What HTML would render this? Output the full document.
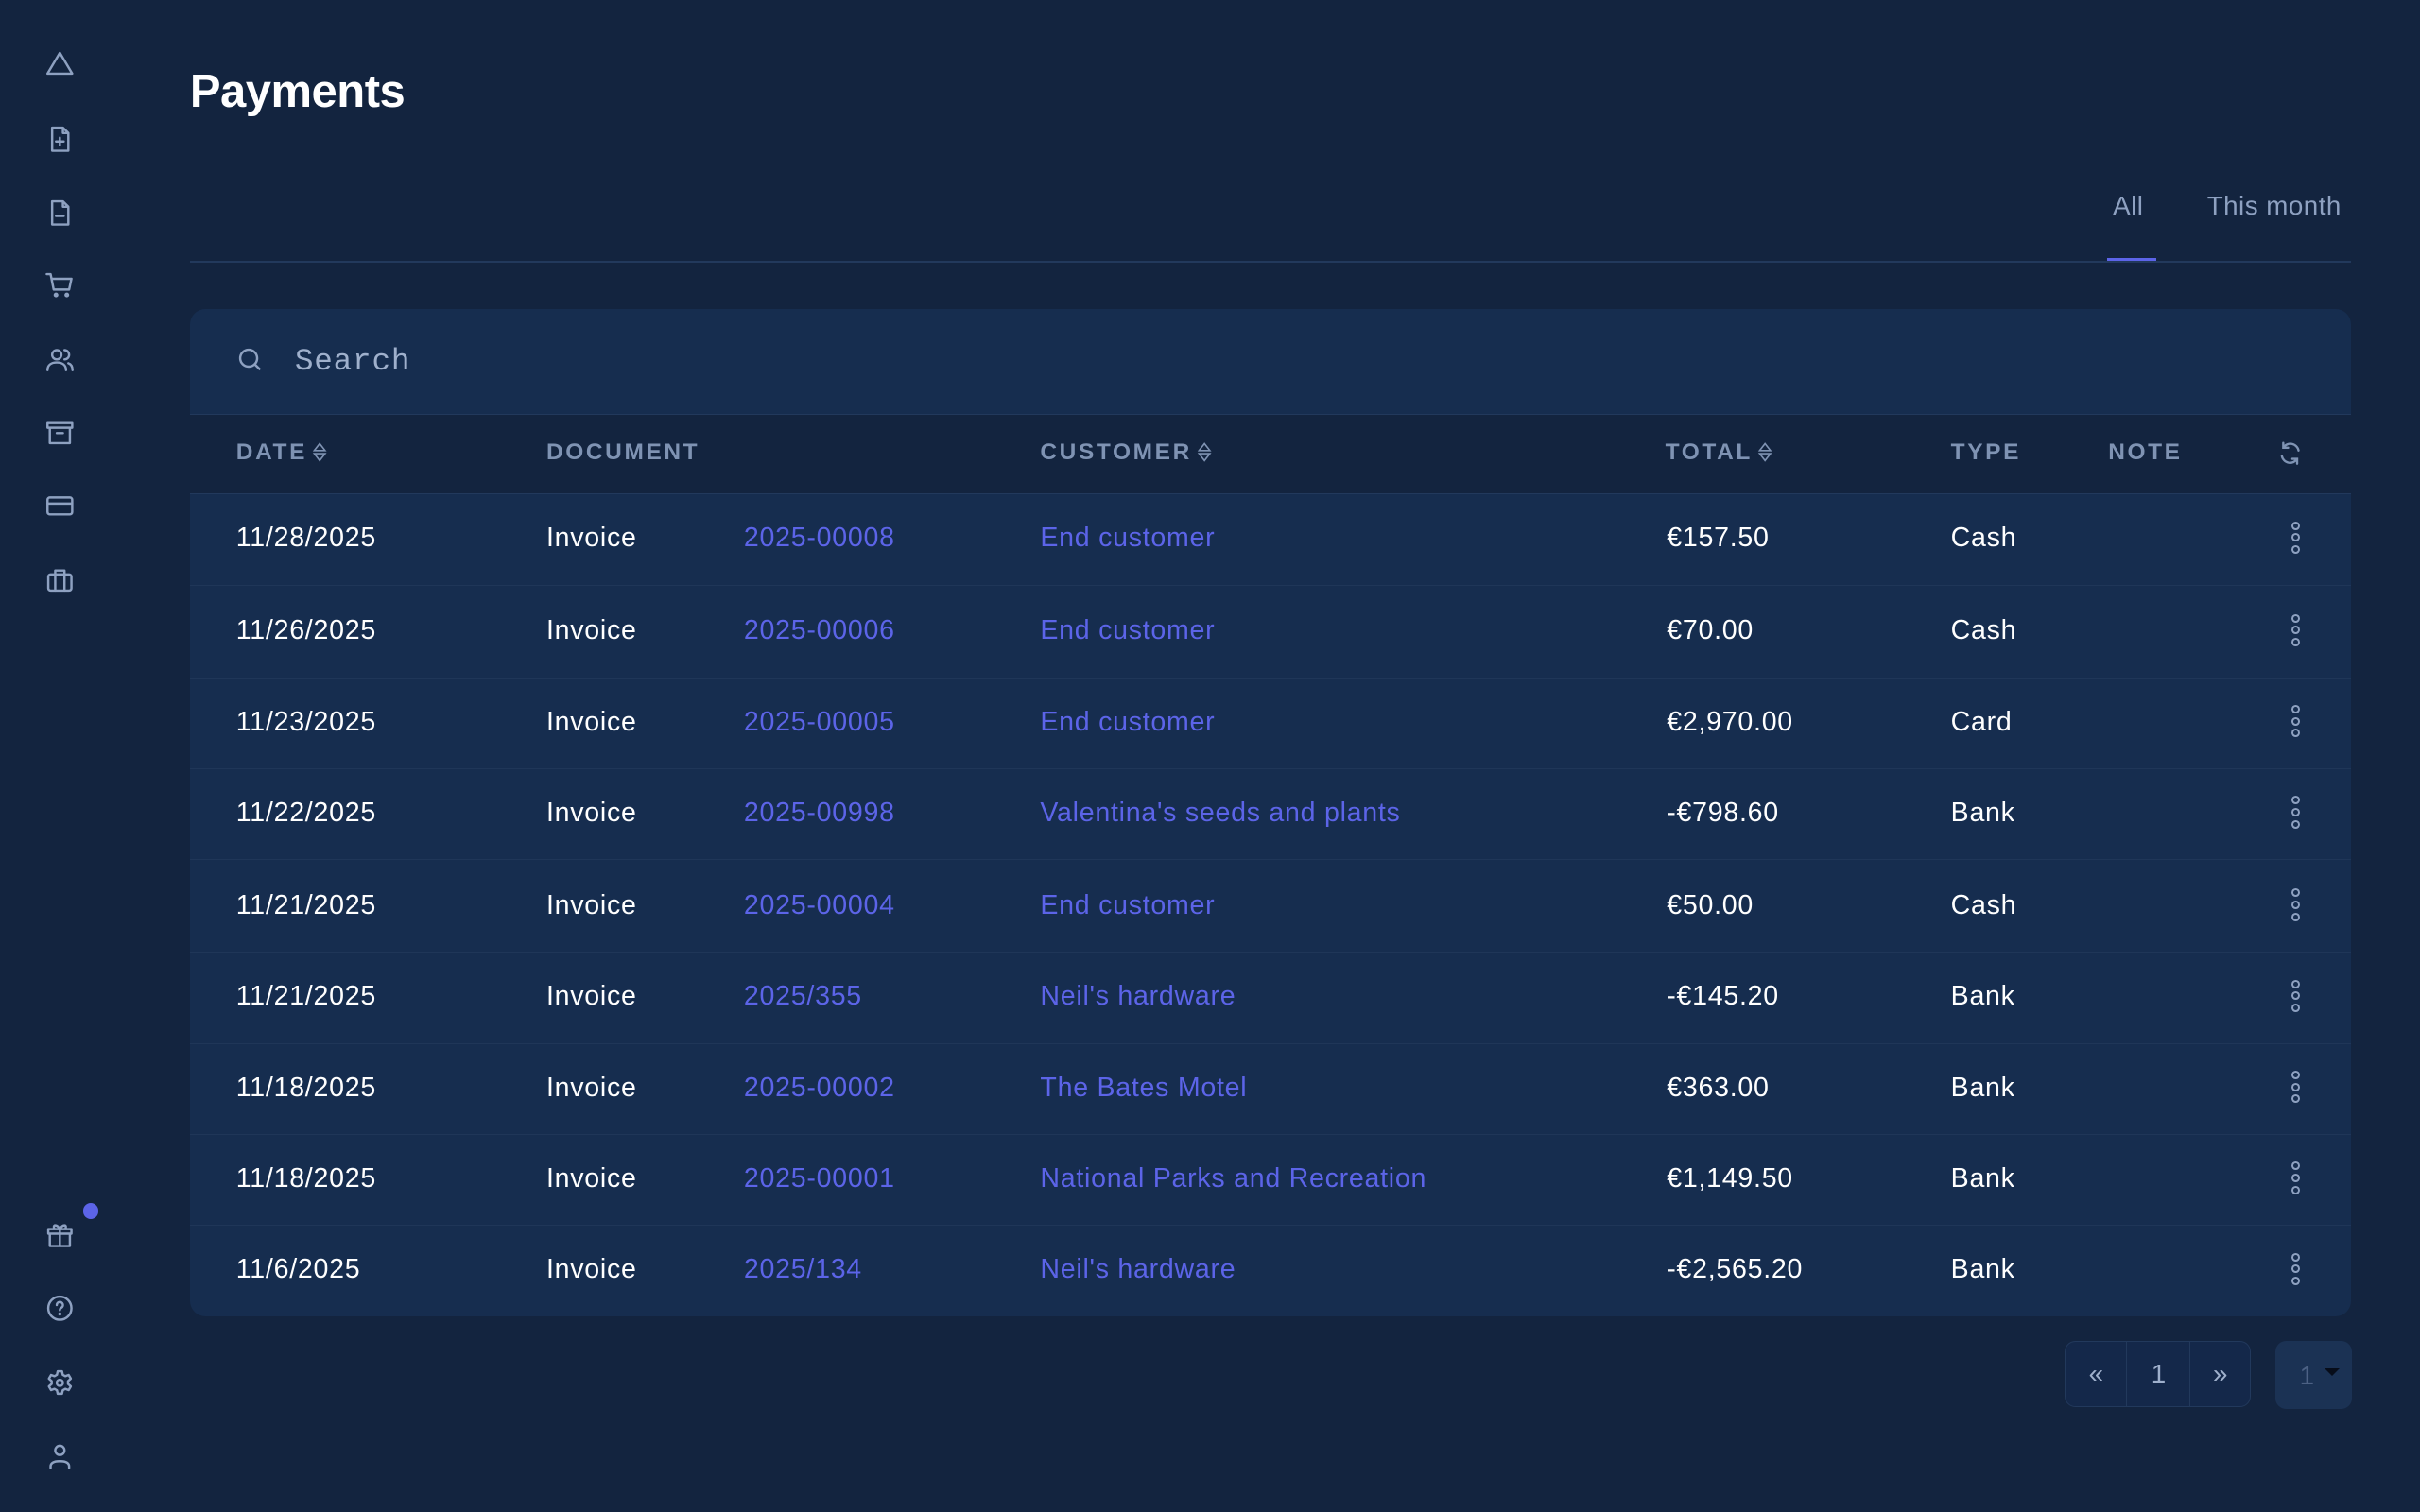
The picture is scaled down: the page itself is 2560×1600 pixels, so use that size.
<!DOCTYPE html>
<html><head><meta charset="utf-8"><style>
html,body{margin:0;padding:0;background:#13243f;overflow:hidden}
#w{zoom:1.632653;width:1568px;height:980px;position:relative;font-family:"Liberation Sans",sans-serif;color:#fff}
.ic{position:absolute;left:29px;width:20px;height:20px}
.ic svg{width:20px;height:20px;fill:none;stroke:#8ea1c1;stroke-width:1.5;stroke-linecap:round;stroke-linejoin:round}
h1{position:absolute;left:123px;top:42px;margin:0;font-size:30px;font-weight:bold;letter-spacing:-0.3px}
.tab{position:absolute;top:124px;font-size:17px;color:#8ea1c1;letter-spacing:0.3px}
.line{position:absolute;left:123px;top:169px;width:1400px;height:1px;background:#22395c}
.card{position:absolute;left:123px;top:200px;width:1400px;height:653px;background:#162d4f;border-radius:10px;overflow:hidden}
.search{position:absolute;left:68px;top:23px;font-family:"Liberation Mono",monospace;font-size:20px;color:#9fb0cc;letter-spacing:0.5px}
.hdr{position:absolute;left:0;top:68px;width:1400px;height:51px;background:#13243f;border-top:1px solid #22395c;border-bottom:1px solid #22395c}
.h{position:absolute;top:17px;font-size:15px;font-weight:bold;letter-spacing:1.6px;color:#7f93b3;line-height:16px}
.h svg{vertical-align:-2px;margin-left:3px}
.row{position:absolute;left:0;width:1400px;height:59px;border-bottom:1px solid #1f3658;font-size:17.5px;letter-spacing:0.45px}
.row span{position:absolute;top:19px}
.l{color:#5c64e8}
.dots{position:absolute;left:1362px;top:18px;width:6px}
.dots i{display:block;width:3px;height:3px;border:1.3px solid #8ea1c1;border-radius:50%;margin-bottom:2.3px}
.pg{position:absolute;top:869px;height:42px;border:1px solid #22395c;border-radius:7px;left:1338px;width:119px;background:#14284a;color:#9fb0cc;font-size:17px}
.pg div{position:absolute;top:0;height:42px;line-height:42px;text-align:center}
</style></head><body><div id="w">
<div class="ic" style="top:31px"><svg viewBox="0 0 20 20"><path d="M10 3L2 16.5h16z"/></svg></div>
<div class="ic" style="top:80px"><svg viewBox="0 0 20 20"><path d="M5 2.5h7l3.5 3.5v11.5H5z M12 2.5v3.5h3.5 M10 9v5 M7.5 11.5h5"/></svg></div>
<div class="ic" style="top:128px"><svg viewBox="0 0 20 20"><path d="M5 2.5h7l3.5 3.5v11.5H5z M12 2.5v3.5h3.5 M7.5 12h5"/></svg></div>
<div class="ic" style="top:175px"><svg viewBox="0 0 20 20"><path d="M1.5 2.5h2.5l2 10h10l1.5-7H5"/><circle cx="7.5" cy="16" r="0.8"/><circle cx="14.5" cy="16" r="0.8"/></svg></div>
<div class="ic" style="top:223px"><svg viewBox="0 0 20 20"><circle cx="8" cy="7" r="3"/><path d="M2 17c0-3.5 2.7-5 6-5s6 1.5 6 5 M13 4a3 3 0 010 6 M15.5 12.5c1.8.6 2.7 2.2 2.7 4.5"/></svg></div>
<div class="ic" style="top:271px"><svg viewBox="0 0 20 20"><path d="M2 3.5h16v3H2z M3.5 6.5v10h13v-10 M8 10h4"/></svg></div>
<div class="ic" style="top:318px"><svg viewBox="0 0 20 20"><rect x="2" y="4.5" width="16" height="11" rx="1.5"/><path d="M2 8.5h16"/></svg></div>
<div class="ic" style="top:366px"><svg viewBox="0 0 20 20"><rect x="2.5" y="6" width="15" height="10.5" rx="1.5"/><path d="M7 6V3.5h6V6 M7 6v10.5 M13 6v10.5"/></svg></div>
<div class="ic" style="top:790px"><svg viewBox="0 0 20 20"><path d="M2.5 6.5h15v3h-15z M3.5 9.5v8h13v-8 M10 6.5v11 M10 6.5C8 3 5 3.5 6.5 6.5 M10 6.5c2-3.5 5-3 3.5 0"/></svg></div>
<div style="position:absolute;left:54px;top:780px;width:10px;height:10px;border-radius:50%;background:#5c64e8"></div>
<div class="ic" style="top:838px"><svg viewBox="0 0 20 20"><circle cx="10" cy="10" r="7.5"/><path d="M8 8a2 2 0 113 1.7c-.7.4-1 .8-1 1.6"/><circle cx="10" cy="13.8" r=".3"/></svg></div>
<div class="ic" style="top:886px"><svg viewBox="0 0 20 20"><path d="M8.6 2.5h2.8l.5 2.3 1.6.9 2.2-.8 1.4 2.4-1.8 1.6v1.8l1.8 1.6-1.4 2.4-2.2-.8-1.6.9-.5 2.3H8.6l-.5-2.3-1.6-.9-2.2.8-1.4-2.4 1.8-1.6V8.9L2.9 7.3l1.4-2.4 2.2.8 1.6-.9z"/><circle cx="10" cy="10" r="2"/></svg></div>
<div class="ic" style="top:934px"><svg viewBox="0 0 20 20"><circle cx="10" cy="6" r="3"/><path d="M4 17.5v-1c0-2.5 2.5-3.5 6-3.5s6 1 6 3.5v1"/></svg></div>

<h1>Payments</h1>
<div class="tab" style="left:1369px">All</div>
<div class="tab" style="left:1430px">This month</div>
<div class="line"></div>
<div style="position:absolute;left:1365px;top:167px;width:32px;height:2px;background:#5c64e8"></div>

<div class="card">
<svg style="position:absolute;left:30px;top:24px" width="18" height="18" viewBox="0 0 18 18" fill="none" stroke="#8ea1c1" stroke-width="1.5"><circle cx="8" cy="8" r="5.5"/><path d="M12 12l3.5 3.5"/></svg>
<div class="search">Search</div>
<div class="hdr">
<div class="h" style="left:30px">DATE<svg width="10" height="14" viewBox="0 0 10 14" fill="none" stroke="#7f93b3" stroke-width="1"><path d="M1.5 6L5 1.5 8.5 6z M1.5 8L5 12.5 8.5 8z"/></svg></div>
<div class="h" style="left:231px">DOCUMENT</div>
<div class="h" style="left:551px">CUSTOMER<svg width="10" height="14" viewBox="0 0 10 14" fill="none" stroke="#7f93b3" stroke-width="1"><path d="M1.5 6L5 1.5 8.5 6z M1.5 8L5 12.5 8.5 8z"/></svg></div>
<div class="h" style="left:956px">TOTAL<svg width="10" height="14" viewBox="0 0 10 14" fill="none" stroke="#7f93b3" stroke-width="1"><path d="M1.5 6L5 1.5 8.5 6z M1.5 8L5 12.5 8.5 8z"/></svg></div>
<div class="h" style="left:1141px">TYPE</div>
<div class="h" style="left:1243px">NOTE</div>
<svg style="position:absolute;left:1352px;top:16px" width="18" height="18" viewBox="0 0 20 20" fill="none" stroke="#7f93b3" stroke-width="1.6" stroke-linecap="round"><path d="M16 8a6 6 0 00-11-2 M4 12a6 6 0 0011 2 M5 2.5V6h3.5 M15 17.5V14h-3.5"/></svg>
</div>
<div class="row" style="top:120px"><span style="left:30px">11/28/2025</span><span style="left:231px">Invoice</span><span class="l" style="left:359px">2025-00008</span><span class="l" style="left:551px">End customer</span><span style="left:957px">€157.50</span><span style="left:1141px">Cash</span><div class="dots"><i></i><i></i><i></i></div></div>
<div class="row" style="top:180px"><span style="left:30px">11/26/2025</span><span style="left:231px">Invoice</span><span class="l" style="left:359px">2025-00006</span><span class="l" style="left:551px">End customer</span><span style="left:957px">€70.00</span><span style="left:1141px">Cash</span><div class="dots"><i></i><i></i><i></i></div></div>
<div class="row" style="top:239px"><span style="left:30px">11/23/2025</span><span style="left:231px">Invoice</span><span class="l" style="left:359px">2025-00005</span><span class="l" style="left:551px">End customer</span><span style="left:957px">€2,970.00</span><span style="left:1141px">Card</span><div class="dots"><i></i><i></i><i></i></div></div>
<div class="row" style="top:298px"><span style="left:30px">11/22/2025</span><span style="left:231px">Invoice</span><span class="l" style="left:359px">2025-00998</span><span class="l" style="left:551px">Valentina's seeds and plants</span><span style="left:957px">-€798.60</span><span style="left:1141px">Bank</span><div class="dots"><i></i><i></i><i></i></div></div>
<div class="row" style="top:358px"><span style="left:30px">11/21/2025</span><span style="left:231px">Invoice</span><span class="l" style="left:359px">2025-00004</span><span class="l" style="left:551px">End customer</span><span style="left:957px">€50.00</span><span style="left:1141px">Cash</span><div class="dots"><i></i><i></i><i></i></div></div>
<div class="row" style="top:417px"><span style="left:30px">11/21/2025</span><span style="left:231px">Invoice</span><span class="l" style="left:359px">2025/355</span><span class="l" style="left:551px">Neil's hardware</span><span style="left:957px">-€145.20</span><span style="left:1141px">Bank</span><div class="dots"><i></i><i></i><i></i></div></div>
<div class="row" style="top:476px"><span style="left:30px">11/18/2025</span><span style="left:231px">Invoice</span><span class="l" style="left:359px">2025-00002</span><span class="l" style="left:551px">The Bates Motel</span><span style="left:957px">€363.00</span><span style="left:1141px">Bank</span><div class="dots"><i></i><i></i><i></i></div></div>
<div class="row" style="top:535px"><span style="left:30px">11/18/2025</span><span style="left:231px">Invoice</span><span class="l" style="left:359px">2025-00001</span><span class="l" style="left:551px">National Parks and Recreation</span><span style="left:957px">€1,149.50</span><span style="left:1141px">Bank</span><div class="dots"><i></i><i></i><i></i></div></div>
<div class="row" style="top:594px;border-bottom:none"><span style="left:30px">11/6/2025</span><span style="left:231px">Invoice</span><span class="l" style="left:359px">2025/134</span><span class="l" style="left:551px">Neil's hardware</span><span style="left:957px">-€2,565.20</span><span style="left:1141px">Bank</span><div class="dots"><i></i><i></i><i></i></div></div>
</div>

<div class="pg"><div style="left:0;width:39px;border-right:1px solid #22395c">«</div><div style="left:40px;width:40px;border-right:1px solid #22395c">1</div><div style="left:81px;width:38px">»</div></div>
<div style="position:absolute;left:1474px;top:869px;width:50px;height:44px;border-radius:7px;background:#1b3254;color:#4c6184;font-size:17px"><span style="position:absolute;left:16px;top:13px">1</span><span style="position:absolute;left:32px;top:18px;border-left:5px solid transparent;border-right:5px solid transparent;border-top:5px solid #070d1a"></span></div>
</div></body></html>
